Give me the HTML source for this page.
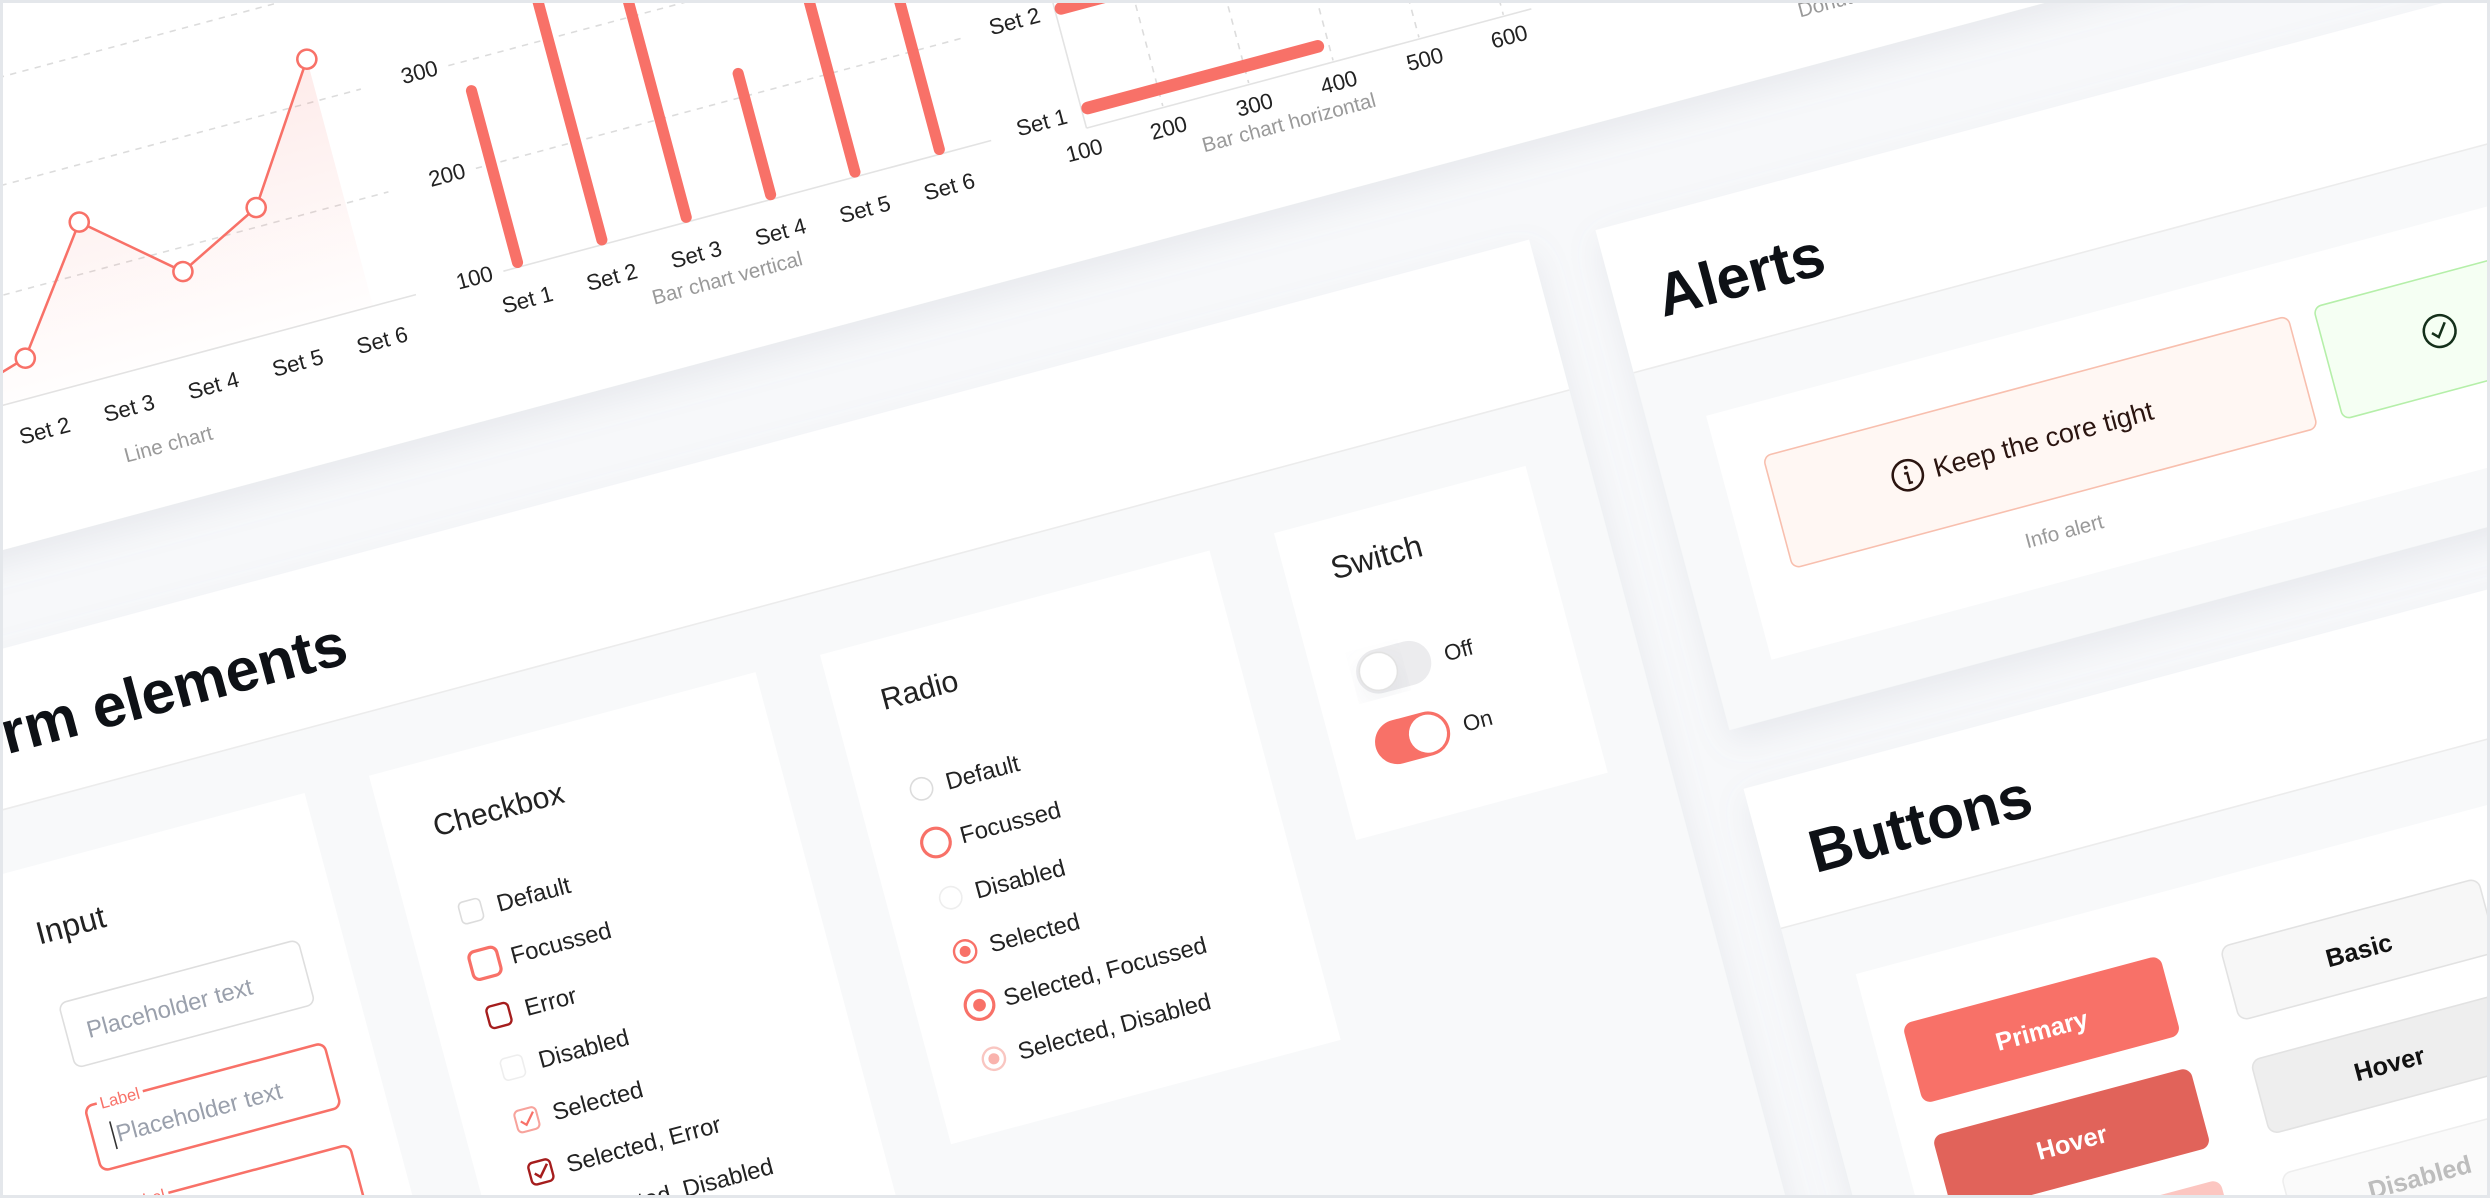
<!DOCTYPE html>
<html><head><meta charset="utf-8">
<style>
html,body{margin:0;padding:0;width:2490px;height:1198px;overflow:hidden;background:#f7f8fa}
#s{position:absolute;left:0;top:0;width:1568px;height:754px;transform:scale(1.588);transform-origin:0 0;overflow:hidden;background:#f7f8fa;contain:paint}
#r{position:absolute;left:0;top:0;transform:rotate(-15deg);transform-origin:0 0}
#frame{position:absolute;left:0;top:0;width:2484px;height:1192px;border:3px solid #e4e7eb;pointer-events:none}
text{font-family:"Liberation Sans",sans-serif}
</style></head><body>
<div id="s"><div id="r">
<svg width="10" height="10" style="position:absolute;left:0;top:0;overflow:visible">
<defs>
<filter id="sh" x="-20%" y="-20%" width="140%" height="140%"><feDropShadow dx="0" dy="8" stdDeviation="10" flood-color="#8890a0" flood-opacity="0.14"/></filter>
<linearGradient id="lg" x1="0" y1="0" x2="0" y2="1"><stop offset="0" stop-color="#f87168" stop-opacity="0.14"/><stop offset="1" stop-color="#f87168" stop-opacity="0.01"/></linearGradient>
</defs>

<rect x="-700" y="-800" width="2800" height="1135" fill="#fff" filter="url(#sh)"/>

<g stroke="#dcdcdc" stroke-dasharray="4 4" stroke-width="1">
<line x1="-230" y1="180" x2="205" y2="180"/><line x1="-230" y1="113" x2="205" y2="113"/><line x1="-230" y1="47" x2="205" y2="47"/>
</g>
<line x1="-230" y1="247" x2="205" y2="247" stroke="#e3e3e3"/>
<path d="M-98 238 L-43 222 L12 148 L67 195 L122 168 L177 86 L177 247 L-98 247 Z" fill="url(#lg)"/>
<polyline points="-98,238 -43,222 12,148 67,195 122,168 177,86" fill="none" stroke="#f87168" stroke-width="1.6"/>
<g fill="#fff" stroke="#f87168" stroke-width="1.6">
<circle cx="-98" cy="238" r="6"/><circle cx="-43" cy="222" r="6"/><circle cx="12" cy="148" r="6"/><circle cx="67" cy="195" r="6"/><circle cx="122" cy="168" r="6"/><circle cx="177" cy="86" r="6"/>
</g>
<g font-size="14" fill="#222" text-anchor="middle">
<text x="-98" y="274">Set 1</text><text x="-43" y="274">Set 2</text><text x="12" y="274">Set 3</text><text x="67" y="274">Set 4</text><text x="122" y="274">Set 5</text><text x="177" y="274">Set 6</text>
</g>
<text x="30" y="302" font-size="13" fill="#9a9a9a" text-anchor="middle">Line chart</text>

<g stroke="#dcdcdc" stroke-dasharray="4 4">
<line x1="262" y1="180" x2="580" y2="180"/><line x1="262" y1="113" x2="580" y2="113"/><line x1="262" y1="47" x2="580" y2="47"/>
</g>
<line x1="262" y1="247" x2="580" y2="247" stroke="#e3e3e3"/>
<g font-size="14" fill="#222" text-anchor="end">
<text x="255" y="251">100</text><text x="255" y="184">200</text><text x="255" y="117">300</text><text x="255" y="51">400</text>
</g>
<g stroke="#f87168" stroke-width="7" stroke-linecap="round">
<line x1="272" y1="244" x2="272" y2="132"/><line x1="327" y1="244" x2="327" y2="-60"/><line x1="382" y1="244" x2="382" y2="-60"/><line x1="437" y1="244" x2="437" y2="165"/><line x1="492" y1="244" x2="492" y2="-60"/><line x1="547" y1="244" x2="547" y2="-60"/>
</g>
<g font-size="14" fill="#222" text-anchor="middle">
<text x="272" y="273">Set 1</text><text x="327" y="273">Set 2</text><text x="382" y="273">Set 3</text><text x="437" y="273">Set 4</text><text x="492" y="273">Set 5</text><text x="547" y="273">Set 6</text>
</g>
<text x="397" y="292" font-size="13" fill="#9a9a9a" text-anchor="middle">Bar chart vertical</text>

<g stroke="#dcdcdc" stroke-dasharray="4 4">
<line x1="690" y1="100" x2="690" y2="254"/><line x1="746" y1="100" x2="746" y2="254"/><line x1="801" y1="100" x2="801" y2="254"/><line x1="857" y1="100" x2="857" y2="254"/><line x1="912" y1="100" x2="912" y2="254"/>
</g>
<line x1="640" y1="100" x2="640" y2="255" stroke="#e3e3e3"/>
<line x1="640" y1="255" x2="930" y2="255" stroke="#e3e3e3"/>
<g stroke="#f87168" stroke-width="8" stroke-linecap="round">
<line x1="644" y1="243" x2="794" y2="243"/><line x1="644" y1="178" x2="890" y2="178"/>
</g>
<g font-size="14" fill="#222" text-anchor="end"><text x="630" y="249">Set 1</text><text x="630" y="183">Set 2</text></g>
<g font-size="14" fill="#222" text-anchor="middle">
<text x="635" y="273">100</text><text x="690" y="273">200</text><text x="746" y="273">300</text><text x="801" y="273">400</text><text x="857" y="273">500</text><text x="912" y="273">600</text>
</g>
<text x="764" y="289" font-size="13" fill="#9a9a9a" text-anchor="middle">Bar chart horizontal</text>
<text x="1092" y="304" font-size="13" fill="#9a9a9a">Donut Chart</text>

<rect x="-700" y="395" width="1591" height="1300" fill="#f8f9fa" filter="url(#sh)"/>
<rect x="-700" y="395" width="1591" height="98" fill="#fff"/>
<line x1="-700" y1="493" x2="891" y2="493" stroke="#ececec"/>
<text x="-165" y="460" font-size="38" font-weight="bold" fill="#0e1116">Form elements</text>

<rect x="-196" y="532" width="252" height="700" fill="#fff"/>
<rect x="98" y="532" width="252" height="700" fill="#fff"/>
<rect x="392" y="532" width="254" height="319" fill="#fff"/>
<rect x="688" y="532" width="164" height="200" fill="#fff"/>

<text x="-130" y="581" font-size="20" fill="#222">Input</text>
<rect x="-128" y="620" width="156" height="42" rx="5" fill="#fff" stroke="#dedede"/>
<text x="-115" y="646" font-size="15" fill="#9aa0ac">Placeholder text</text>
<rect x="-129" y="687" width="156" height="42" rx="5" fill="#fff" stroke="#f87168" stroke-width="1.6"/>
<rect x="-121" y="682" width="30" height="10" fill="#fff"/>
<text x="-119" y="691" font-size="10.5" fill="#f87168">Label</text>
<line x1="-116" y1="700" x2="-116" y2="718" stroke="#333" stroke-width="1"/>
<text x="-114" y="714" font-size="15" fill="#9aa0ac">Placeholder text</text>
<rect x="-130" y="753" width="156" height="42" rx="5" fill="#fff" stroke="#f87168" stroke-width="1.6"/>
<rect x="-122" y="748" width="30" height="10" fill="#fff"/>
<text x="-120" y="757" font-size="10.5" fill="#f87168">Label</text>
<text x="-116" y="780" font-size="15" fill="#222">Input text</text>

<text x="129" y="580" font-size="19" fill="#222">Checkbox</text>
<g font-size="15" fill="#222">
<rect x="131" y="624" width="14" height="14" rx="3" fill="#fff" stroke="#dcdcdc"/><text x="155" y="636">Default</text>
<rect x="129" y="656" width="18" height="18" rx="4" fill="#fff" stroke="#f87168" stroke-width="2"/><text x="155" y="670">Focussed</text>
<rect x="131" y="692" width="14" height="14" rx="3" fill="#fff" stroke="#a51d1d" stroke-width="1.5"/><text x="155" y="704">Error</text>
<rect x="131" y="726" width="14" height="14" rx="3" fill="#fff" stroke="#eeeeee"/><text x="155" y="738">Disabled</text>
<rect x="131" y="760" width="14" height="14" rx="3" fill="#fff" stroke="#f7a39c" stroke-width="1.3"/><path d="M134 767 l3 3 l6 -7" fill="none" stroke="#f87168" stroke-width="1.4"/><text x="155" y="772">Selected</text>
<rect x="131" y="794" width="14" height="14" rx="3" fill="#fff" stroke="#a51d1d" stroke-width="1.5"/><path d="M134 801 l3 3 l6 -7" fill="none" stroke="#a51d1d" stroke-width="1.6"/><text x="155" y="806">Selected, Error</text>
<rect x="131" y="828" width="14" height="14" rx="3" fill="#fff" stroke="#f6d0cd"/><path d="M134 835 l3 3 l6 -7" fill="none" stroke="#f6c0bb" stroke-width="1.4"/><text x="155" y="840">Selected, Disabled</text>
</g>

<text x="422" y="576" font-size="19" fill="#222">Radio</text>
<g font-size="15" fill="#222">
<circle cx="432" cy="630" r="7" fill="#fff" stroke="#dcdcdc"/><text x="448" y="635">Default</text>
<circle cx="432" cy="665" r="9" fill="#fff" stroke="#f87168" stroke-width="2"/><text x="448" y="670">Focussed</text>
<circle cx="432" cy="701" r="7" fill="#fff" stroke="#eeeeee"/><text x="448" y="706">Disabled</text>
<circle cx="432" cy="736" r="7" fill="#fff" stroke="#f87168" stroke-width="1.5"/><circle cx="432" cy="736" r="3.5" fill="#f87168"/><text x="448" y="741">Selected</text>
<circle cx="432" cy="771" r="9" fill="#fff" stroke="#f87168" stroke-width="2"/><circle cx="432" cy="771" r="4" fill="#f87168"/><text x="448" y="776">Selected, Focussed</text>
<circle cx="432" cy="806" r="7" fill="#fff" stroke="#f9c6c1" stroke-width="1.5"/><circle cx="432" cy="806" r="3.5" fill="#f9b3ad"/><text x="448" y="811">Selected, Disabled</text>
</g>

<text x="717" y="570" font-size="20" fill="#222">Switch</text>
<rect x="715" y="619" width="48" height="28" rx="14" fill="#ececee"/>
<circle cx="729" cy="633" r="12" fill="#fff" stroke="#e2e2e2" filter="url(#sh)"/>
<text x="772" y="638" font-size="14" fill="#222">Off</text>
<rect x="715" y="665" width="48" height="28" rx="14" fill="#f87168"/>
<circle cx="749" cy="679" r="12" fill="#fff"/>
<text x="772" y="684" font-size="14" fill="#222">On</text>

<rect x="933" y="400" width="1100" height="326" fill="#f8f9fa" filter="url(#sh)"/>
<rect x="933" y="400" width="1100" height="93" fill="#fff"/>
<line x1="933" y1="493" x2="2033" y2="493" stroke="#ececec"/>
<text x="960" y="464" font-size="38" font-weight="bold" fill="#0e1116">Alerts</text>
<rect x="970" y="531" width="1100" height="159" fill="#fff"/>
<rect x="998" y="565" width="342" height="73" rx="5" fill="#fff7f3" stroke="#f8bfae"/>
<circle cx="1083" cy="600" r="9.5" fill="none" stroke="#2b1510" stroke-width="1.6"/>
<circle cx="1083" cy="595" r="1.2" fill="#2b1510"/>
<path d="M1081 598.5 h2 v6.5 h2" fill="none" stroke="#2b1510" stroke-width="1.5"/>
<text x="1100" y="606" font-size="17" fill="#2b1510">Keep the core tight</text>
<text x="1169" y="664" font-size="13" fill="#9a9a9a" text-anchor="middle">Info alert</text>
<rect x="1357" y="564" width="400" height="73" rx="5" fill="#f5fff3" stroke="#b5efa9"/>
<circle cx="1430" cy="599" r="10" fill="none" stroke="#14301a" stroke-width="1.6"/>
<path d="M1425 599 l3.5 3.5 l6 -8" fill="none" stroke="#14301a" stroke-width="1.6"/>

<rect x="932" y="764" width="1100" height="800" fill="#f8f9fa" filter="url(#sh)"/>
<rect x="932" y="764" width="1100" height="91" fill="#fff"/>
<line x1="932" y1="855" x2="2032" y2="855" stroke="#ececec"/>
<text x="962" y="827" font-size="38" font-weight="bold" fill="#0e1116">Buttons</text>
<rect x="970" y="895" width="1100" height="600" fill="#fff"/>
<rect x="990" y="933" width="168" height="52" rx="6" fill="#f87168"/>
<text x="1074" y="965" font-size="16" font-weight="bold" fill="#fff" text-anchor="middle">Primary</text>
<rect x="990" y="1006" width="168" height="52" rx="6" fill="#e1635a"/>
<text x="1074" y="1038" font-size="16" font-weight="bold" fill="#fff" text-anchor="middle">Hover</text>
<rect x="990" y="1079" width="168" height="52" rx="6" fill="#fcc6c1"/>
<text x="1074" y="1111" font-size="16" font-weight="bold" fill="#fff" text-anchor="middle">Disabled</text>
<rect x="1196" y="938" width="168" height="48" rx="6" fill="#f7f7f7" stroke="#e2e2e2"/>
<text x="1280" y="968" font-size="16" font-weight="bold" fill="#111" text-anchor="middle">Basic</text>
<rect x="1196" y="1012" width="168" height="48" rx="6" fill="#eeeeee" stroke="#e2e2e2"/>
<text x="1280" y="1042" font-size="16" font-weight="bold" fill="#111" text-anchor="middle">Hover</text>
<rect x="1196" y="1086" width="168" height="48" rx="6" fill="#fafafa" stroke="#eeeeee"/>
<text x="1280" y="1116" font-size="16" font-weight="bold" fill="#bdbdbd" text-anchor="middle">Disabled</text>
</svg>
</div></div>
<div id="frame"></div>
</body></html>
